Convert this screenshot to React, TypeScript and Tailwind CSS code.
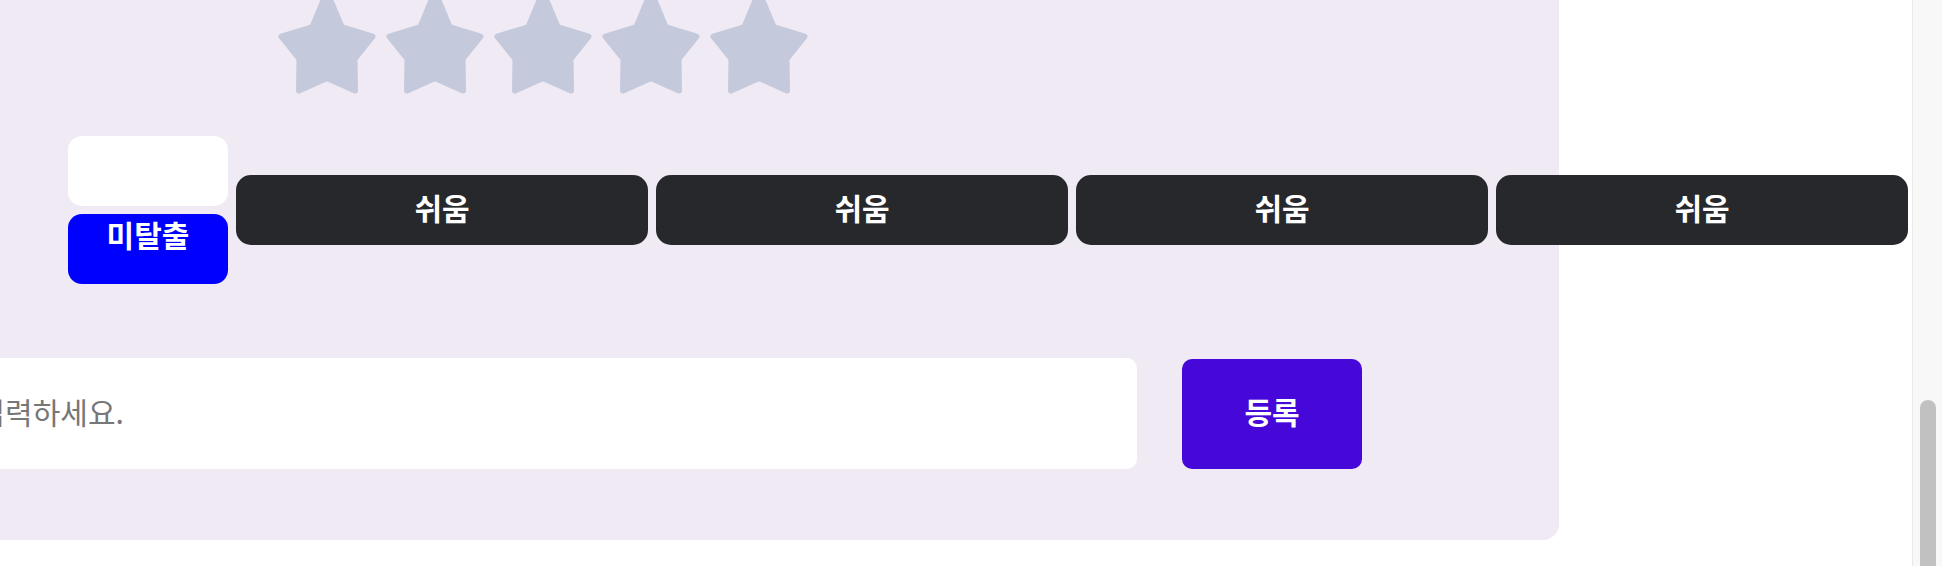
const FONT = "font-['Noto_Sans_CJK_KR','Noto_Sans',sans-serif]";

const levels = ["쉬움", "쉬움", "쉬움", "쉬움"];

function Star() {
  return (
    <svg width="100" height="107" viewBox="0 0 100 107" className="shrink-0 overflow-visible">
      <path
        d="M50 5 L64.5 40 L95.5 49.5 L77.5 72 L78 103.5 L50 91 L22 103.5 L22.5 72 L4.5 49.5 L35.5 40 Z"
        fill="#c5c9dc"
        stroke="#c5c9dc"
        strokeWidth="6"
        strokeLinejoin="round"
      />
    </svg>
  );
}

function FakeScrollbar() {
  return (
    <div className="h-full w-[30px] shrink-0 border-l border-[#e9e9e9] bg-[#f8f8f8] pl-[7px] pt-[400px]">
      <div className="h-full w-[16px] rounded-t-full bg-[#c1c1c1]" />
    </div>
  );
}

export default function App() {
  return (
    <div className={`flex h-[566px] w-full overflow-hidden bg-white ${FONT}`}>
      <div className="min-w-0 flex-1 overflow-hidden">
        <div className="-ml-[180px] -mt-[53px] w-[1739px] rounded-2xl bg-[#efeaf3] pb-[71px] pt-[40px]">
          {/* rating */}
          <div className="flex gap-2 pl-[457px]">
            {[0, 1, 2, 3, 4].map((i) => (
              <Star key={i} />
            ))}
          </div>

          {/* difficulty row */}
          <div className="mt-[42px] flex items-center gap-2 pl-[248px]">
            <div className="flex w-[160px] shrink-0 flex-col gap-2">
              <div className="h-[70px] rounded-[14px] bg-white" />
              <div className="h-[70px] rounded-[14px] bg-[#0000ff] text-center text-[30px] font-bold leading-[40px] text-white">
                미탈출
              </div>
            </div>
            {levels.map((label, i) => (
              <button
                key={i}
                className="flex h-[70px] w-[412px] shrink-0 items-center justify-center rounded-[15px] bg-[#27282c] pb-[6px] text-[30px] font-bold text-white"
              >
                {label}
              </button>
            ))}
          </div>

          {/* comment input */}
          <div className="mt-[74px] flex items-center gap-[45px] pl-[40px]">
            <input
              readOnly
              placeholder="내용을 입력하세요."
              className="h-[111px] w-[1277px] shrink-0 rounded-[10px] bg-white pb-[5px] pl-[28px] text-[30px] text-[#333] outline-none placeholder:text-[#777777]"
            />
            <button className="flex h-[110px] w-[180px] shrink-0 items-center justify-center rounded-[10px] bg-[#4607d9] pb-[5px] text-[30px] font-bold text-white">
              등록
            </button>
          </div>
        </div>
      </div>
      <FakeScrollbar />
    </div>
  );
}
